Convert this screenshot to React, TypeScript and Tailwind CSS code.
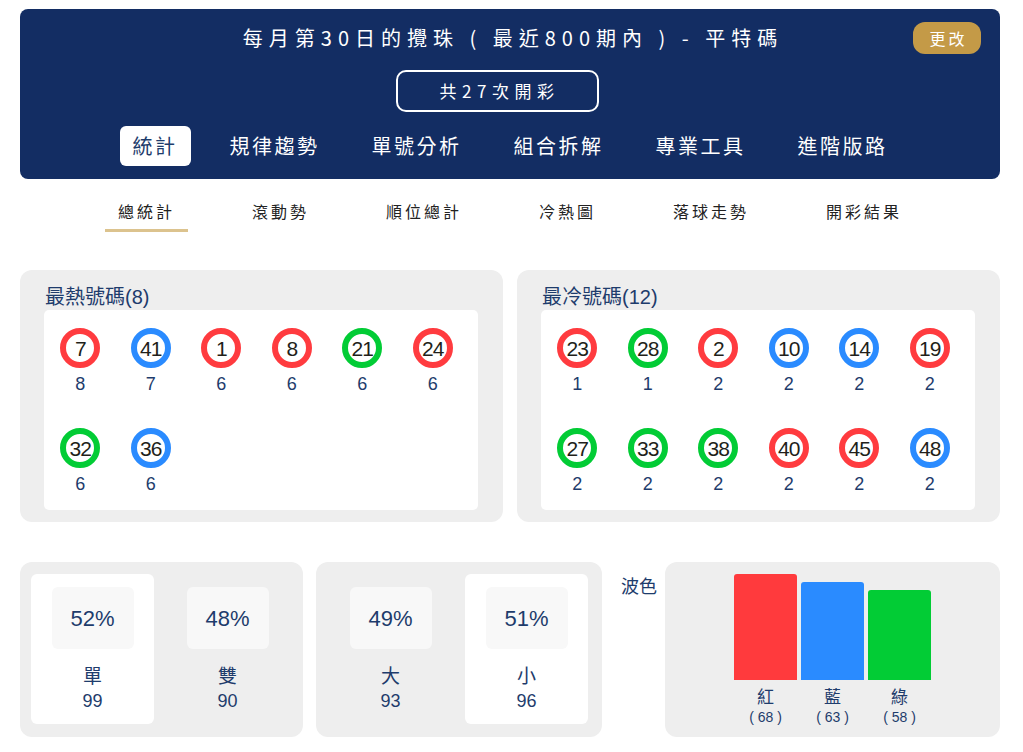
import React from "react";

type C = "r" | "b" | "g";
const ring: Record<C, string> = {
  r: "border-[#ff3b3f]",
  b: "border-[#2a8bff]",
  g: "border-[#02cc35]",
};

const hot: [number, C, number][] = [
  [7, "r", 8],
  [41, "b", 7],
  [1, "r", 6],
  [8, "r", 6],
  [21, "g", 6],
  [24, "r", 6],
  [32, "g", 6],
  [36, "b", 6],
];
const cold: [number, C, number][] = [
  [23, "r", 1],
  [28, "g", 1],
  [2, "r", 2],
  [10, "b", 2],
  [14, "b", 2],
  [19, "r", 2],
  [27, "g", 2],
  [33, "g", 2],
  [38, "g", 2],
  [40, "r", 2],
  [45, "r", 2],
  [48, "b", 2],
];

const NAVY = "text-[#1e3c6c]";

function Ball({ n, c, cnt }: { n: number; c: C; cnt: number }) {
  return (
    <div className="flex flex-col items-center">
      <div
        className={`w-10 h-10 rounded-full border-[6px] ${ring[c]} bg-white flex items-center justify-center`}
      >
        <span className="text-[21px] leading-none text-[#221f1a] tracking-[-1px]">{n}</span>
      </div>
      <div className={`mt-[5px] leading-[22px] text-[18px] ${NAVY}`}>{cnt}</div>
    </div>
  );
}

function NumPanel({ title, items }: { title: string; items: [number, C, number][] }) {
  return (
    <div className="w-[483px] bg-[#eeeeee] rounded-xl pt-[14px] pb-[12px] pl-[24px] pr-[25px]">
      <div className={`text-[20px] leading-[26px] pl-[1px] ${NAVY}`}>{title}</div>
      <div className="bg-white rounded-[5px] h-[200px] pt-[18px] pl-[1px]">
        <div className="grid grid-cols-[repeat(6,70.5px)] gap-y-[33px]">
          {items.map(([n, c, cnt], i) => (
            <Ball key={i} n={n} c={c} cnt={cnt} />
          ))}
        </div>
      </div>
    </div>
  );
}

function StatCard({ pct, label, num, hi }: { pct: string; label: string; num: number; hi?: boolean }) {
  return (
    <div
      className={`w-[123px] h-[150px] rounded-md flex flex-col items-center pt-[13px] ${hi ? "bg-white" : ""}`}
    >
      <div className={`w-[82px] h-[62px] bg-[#f8f8f8] rounded-md flex items-center justify-center text-[22px] ${NAVY}`}>
        {pct}
      </div>
      <div className={`mt-[16px] text-[19px] leading-[24px] ${NAVY}`}>{label}</div>
      <div className={`text-[18px] leading-[24px] ${NAVY}`}>{num}</div>
    </div>
  );
}

const bars = [
  { label: "紅", v: 68, color: "bg-[#ff3a3d]" },
  { label: "藍", v: 63, color: "bg-[#2a8bff]" },
  { label: "綠", v: 58, color: "bg-[#02cc35]" },
];

export default function App() {
  const tabs = ["統計", "規律趨勢", "單號分析", "組合拆解", "專業工具", "進階版路"];
  const sub = ["總統計", "滾動勢", "順位總計", "冷熱圖", "落球走勢", "開彩結果"];
  const max = 68;
  return (
    <div
      className="w-[1023px] min-h-[752px] bg-white pt-[9px]"
      style={{ fontFamily: '"Liberation Sans", "Noto Sans CJK TC", sans-serif' }}
    >
      <div className="w-[980px] ml-5">
        {/* Header */}
        <div
          className="bg-[#132d63] rounded-lg pt-[13px] pb-[13px] px-[19px] flex flex-col items-center text-white"
          style={{ fontFamily: '"Noto Sans CJK TC", sans-serif' }}
        >
          <div className="w-full grid grid-cols-[1fr_auto_1fr] items-center h-[32px]">
            <div />
            <div className="text-[20px] leading-[28px] tracking-[6px] pl-[6px]">
              每月第30日的攪珠 ( 最近800期內 ) - 平特碼
            </div>
            <div className="flex justify-end">
              <div className="w-[68px] h-[32px] rounded-[12px] bg-[#c49a47] flex items-center justify-center text-[16px] tracking-[3px] pl-[3px]">
                更改
              </div>
            </div>
          </div>
          <div className="mt-[16px] mr-[26px] w-[203px] h-[42px] border-2 border-white rounded-[10px] flex items-center justify-center text-[17px] tracking-[5.5px] pl-[5px]">
            共27次開彩
          </div>
          <div className="mt-[14px] flex gap-[26px]">
            {tabs.map((t, i) => (
              <div
                key={t}
                className={`h-[40px] px-[13px] rounded-md flex items-center text-[20px] tracking-[2.5px] ${
                  i === 0 ? "bg-white text-[#1e3c6c]" : "text-white"
                }`}
              >
                {t}
              </div>
            ))}
          </div>
        </div>

        {/* Sub nav */}
        <div
          className="mt-[14px] flex justify-center gap-[51px]"
          style={{ fontFamily: '"Noto Sans CJK TC", sans-serif' }}
        >
          {sub.map((s, i) => (
            <div
              key={s}
              className={`px-[13px] pt-[6px] pb-[6px] text-[16px] leading-[24px] tracking-[3px] text-[#222] border-b-[3px] ${
                i === 0 ? "border-[#dcc38e]" : "border-transparent"
              }`}
            >
              {s}
            </div>
          ))}
        </div>

        {/* Hot / Cold */}
        <div className="mt-[38px] flex gap-[14px]">
          <NumPanel title="最熱號碼(8)" items={hot} />
          <NumPanel title="最冷號碼(12)" items={cold} />
        </div>

        {/* Bottom */}
        <div className="mt-[40px] flex items-start">
          <div className="w-[283px] h-[175px] bg-[#eeeeee] rounded-xl pt-[12px] pl-[11px] flex gap-[12px]">
            <StatCard pct="52%" label="單" num={99} hi />
            <StatCard pct="48%" label="雙" num={90} />
          </div>
          <div className="ml-[13px] w-[286px] h-[175px] bg-[#eeeeee] rounded-xl pt-[12px] pl-[13px] flex gap-[13px]">
            <StatCard pct="49%" label="大" num={93} />
            <StatCard pct="51%" label="小" num={96} hi />
          </div>
          <div className={`ml-[19px] w-[36px] mt-[13px] text-[18px] leading-[24px] ${NAVY}`}>波色</div>
          <div className="ml-[8px] flex-1 h-[175px] bg-[#eeeeee] rounded-xl pt-[12px] flex justify-center gap-[4px]">
            {bars.map((b) => (
              <div key={b.label} className="w-[63px] flex flex-col items-center">
                <div className="h-[106px] w-full flex items-end">
                  <div
                    className={`w-full rounded-t-[3px] ${b.color}`}
                    style={{ height: `${(b.v / max) * 106}px` }}
                  />
                </div>
                <div className={`mt-[8px] text-[17px] leading-[20px] ${NAVY}`}>{b.label}</div>
                <div className={`text-[14px] leading-[18px] ${NAVY}`}>( {b.v} )</div>
              </div>
            ))}
          </div>
        </div>
      </div>
    </div>
  );
}
